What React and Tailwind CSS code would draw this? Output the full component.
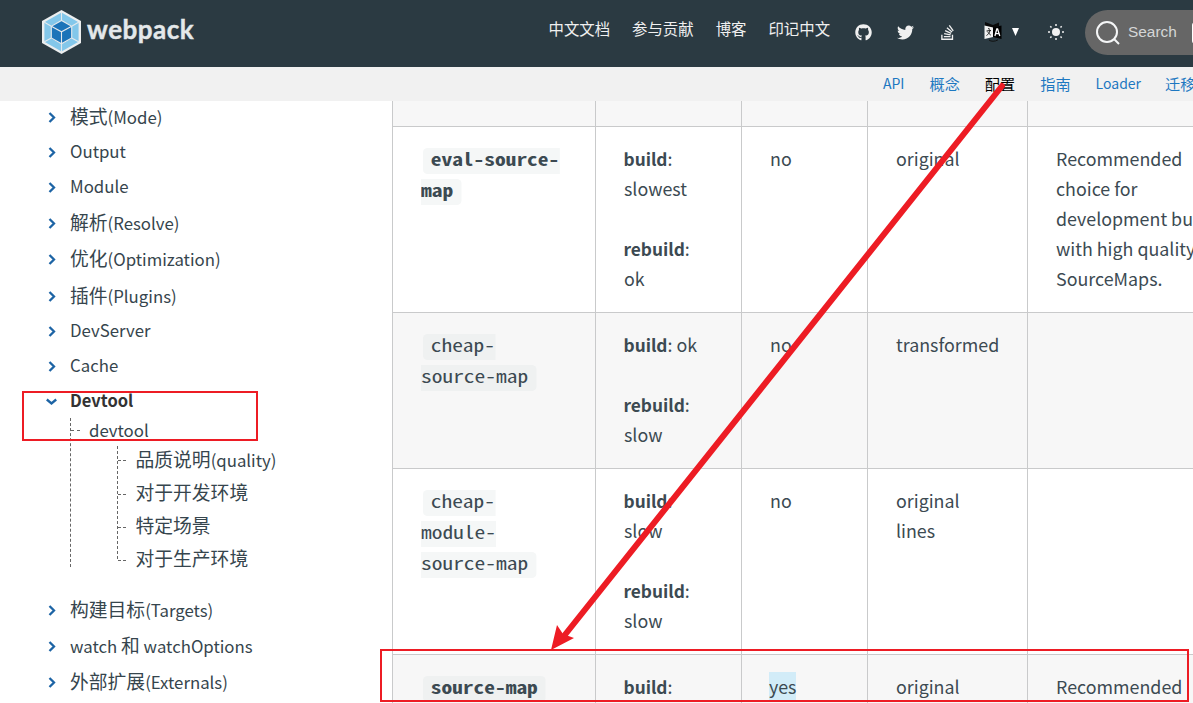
import React from "react";
import { FaGithub, FaTwitter, FaStackOverflow } from "react-icons/fa";

const CJK = /([\u3400-\u9fff]+)/;

function Mixed({ text, cjk, latin }) {
  return text.split(CJK).filter(Boolean).map((part, i) => (
    <span key={i} className={CJK.test(part) ? cjk : latin}>{part}</span>
  ));
}

function Logo() {
  return (
    <svg className="h-11 w-[39px]" viewBox="0 0 39 44">
      <path d="M19.5 0 39 11v22L19.5 44 0 33V11z" fill="#eceeef" />
      <path d="M19.5 2.6 36.6 12.200v19.600L19.5 41.4 2.400 31.800V12.200z" fill="#83c7ea" />
      <path d="M19.5 10.5 29.7 16v12.4L19.5 34 9.3 28.4V16z" fill="#1c74b9" />
      <path d="M19.5 2v9M19.5 34v8M2 12l7.3 4.2M37 12l-7.3 4.2M2 32l7.3-4M37 32l-7.3-4M9.3 16.2v11.8l10.2 5.8 10.2-5.8V16.2L19.5 10.5zM9.3 16.2l10.2 5.6 10.2-5.6M19.5 21.8v12" fill="none" stroke="#e4e9ec" strokeWidth="1.1" />
    </svg>
  );
}

function LanguageIcon() {
  return (
    <svg className="h-5 w-[18px]" viewBox="0 0 18 20">
      <path d="M1 0l4 1.500L9 3l6-2.500V4L9 6 1 4z" fill="#0a0a0a" />
      <path d="M.5 3.500 9 5.500V15L.5 17z" fill="#f2f2f2" />
      <path d="M9 5.500 17.5 3.500V17L9 15z" fill="#000" />
      <path d="M4 6.500l2 .8M2.500 9l4.500-.6M6 8.500c-.5 2.500-2 4-3.500 5M3.500 10l3.300 3.200" stroke="#222" fill="none" />
      <path d="m10.900 14 1.900-7h.8l2.200 7M11.700 11.700h3.500" stroke="#fff" strokeWidth="1.300" fill="none" />
      <path d="M5 18c2 1.700 6 1.700 9-.2" stroke="#111" fill="none" />
    </svg>
  );
}

function SunIcon() {
  return (
    <svg className="size-4" viewBox="0 0 16 16">
      <circle cx="8" cy="8" r="4" fill="#f2f2f2" />
      <path d="M8 0v2M8 14v2M0 8h2M14 8h2M2.300 2.300l1.200 1.200M12.500 12.500l1.200 1.200M2.300 13.700l1.200-1.200M12.500 3.500l1.200-1.200" stroke="#f2f2f2" strokeWidth="1.500" />
    </svg>
  );
}

function Header() {
  return (
    <header className="flex h-[67px] w-full bg-[#2b3a42] text-[#f0f0f0]">
      <div className="flex w-[548.5px] shrink-0 pt-2.5 pl-[42px]">
        <Logo />
        <span className="ml-1.5 h-9 font-[Lato] text-[26px] leading-[38px] font-bold tracking-[0.5px] text-[#e4e8ea] [-webkit-text-stroke:0.4px_#e4e8ea]">webpack</span>
      </div>
      <nav className="flex shrink-0 gap-[22px] pt-3.5 text-[15.4px] leading-7">
        <a>中文文档</a><a>参与贡献</a><a>博客</a><a>印记中文</a>
      </nav>
      <div className="flex h-16 shrink-0 items-center pl-[24.500px]">
        <FaGithub className="size-[17px]" />
        <FaTwitter className="ml-[25px] size-[17px]" />
        <FaStackOverflow className="ml-[25px] size-[17px]" />
        <div className="ml-7 flex items-center"><LanguageIcon /><svg className="mb-px ml-2.5 h-2 w-[7px]" viewBox="0 0 7 8"><path d="M0 0h7L3.500 8z" fill="#fff" /></svg></div>
        <div className="ml-[29px]"><SunIcon /></div>
      </div>
      <div className="mt-2.5 ml-[21.500px] flex h-[45px] w-[150px] shrink-0 items-center rounded-l-full bg-[#666] pl-[11px]">
        <svg className="size-6" viewBox="0 0 24 24" fill="none" stroke="#f5f6f7" strokeWidth="2"><circle cx="11" cy="11" r="10" /><path d="m18 18 5 5" /></svg>
        <span className="-mt-[2px] ml-2 font-['Liberation_Sans'] text-[15.400px] text-[#d5d6d7]">Search</span>
        <span className="ml-[15px] h-[22px] w-6 rounded-[3px] border border-white bg-[#d5dbe4]" />
      </div>
    </header>
  );
}

function SubNav() {
  return (
    <nav className="flex h-[34px] w-full gap-[25px] bg-[#f1f1f1] pl-[883px] text-[14px] leading-[32px] whitespace-nowrap text-[#1d78c1]">
      <a>API</a><a className="text-[15.200px]">概念</a><a className="text-[15.200px] text-black">配置</a><a className="text-[15.200px]">指南</a><a>Loader</a><a className="-ml-px text-[15.200px]">迁移</a>
    </nav>
  );
}

function Chevron({ open }) {
  return (
    <svg className="mt-[3px] w-[11px] shrink-0" height="12" viewBox="0 0 11 12" fill="none" stroke="#1d64a5" strokeWidth="2.300">
      {open ? <path d="m.8 3.500 4.700 4L10.200 3.500" /> : <path d="m3.500 1 4.500 4.500L3.500 10" />}
    </svg>
  );
}

function Item({ text, gap, open }) {
  const plain = CJK.test(text) ? "ml-[13px]" : "ml-[13px] pt-[2px]";
  return (
    <div className={`flex h-6 items-center pl-[46px] ${gap}`}>
      <Chevron open={open} />
      <span className={open ? "ml-[13px] text-[16.500px] font-bold text-[#333]" : plain}>
        {open ? text : <Mixed text={text} cjk="text-[18.800px]" latin="text-[16.800px]" />}
      </span>
    </div>
  );
}

const sections = [
  ["模式(Mode)", "mt-[3px]"], ["Output", "mt-[11px]"], ["Module", "mt-[11px]"],
  ["解析(Resolve)", "mt-3"], ["优化(Optimization)", "mt-3"], ["插件(Plugins)", "mt-[13px]"],
  ["DevServer", "mt-[11px]"], ["Cache", "mt-[11px]"],
];
const topics = [
  ["品质说明(quality)", "-mt-[3px] h-[27px] pb-px"], ["对于开发环境", "mt-[3px] h-[33px]"], ["特定场景", "h-[33px]"], ["对于生产环境", "h-[33px]"],
];
const more = [["构建目标(Targets)", "mt-[30px]"], ["watch 和 watchOptions", "mt-3"], ["外部扩展(Externals)", "mt-3"]];

function Sidebar() {
  return (
    <aside className="w-[392px] shrink-0 whitespace-nowrap text-[#36454d]">
      {sections.map(([t, g]) => <Item key={t} text={t} gap={g} />)}
      <Item text="Devtool" gap="mt-[11px]" open />
      <div className="mt-[6px] ml-[70px] h-[149px] border-l border-dashed border-[#666]">
        <div className="flex h-6 items-center"><i className="w-[9px] border-t border-dashed border-[#666]" /><span className="ml-[9px] pt-[2px] text-[16.800px]">devtool</span></div>
        <div className="mt-[7px] ml-[46px] h-[113px] border-l border-dashed border-[#666]">
          {topics.map(([t, h]) => (
            <div key={t} className={`flex items-center ${h}`}>
              <i className="mt-[3px] w-2 border-t border-dashed border-[#666]" />
              <span className="ml-[9.500px]"><Mixed text={t} cjk="text-[18.800px]" latin="text-[16.800px]" /></span>
            </div>
          ))}
        </div>
      </div>
      {more.map(([t, g]) => <Item key={t} text={t} gap={g} />)}
    </aside>
  );
}

function Code({ lines, bold, dark }) {
  const bg = dark ? "bg-[#eff1f1]" : "bg-[#f5f7f7]";
  return (
    <div className={`flex flex-col items-start gap-[5px] pt-[5px] font-['Noto_Sans_Mono_CJK_SC','Liberation_Mono',monospace] text-[18px] leading-[21px] ${bold ? "font-bold" : ""}`}>
      {lines.map((l, i) => (
        <code key={l} className={`h-[26px] origin-left scale-x-[1.19] font-[inherit] ${bg} ${i === 0 ? "ml-0.5 rounded-l pl-[6.500px]" : ""} ${i === lines.length - 1 ? "rounded-r pr-[6.500px]" : ""}`}>{l}</code>
      ))}
    </div>
  );
}

const rows = [
  { h: "h-[186px]", bg: "", code: ["eval-source-", "map"], bold: true, build: "slowest", rebuild: "ok", prod: "no", quality: ["original"], note: ["Recommended", "choice for", "development bu", "with high quality", "SourceMaps."] },
  { h: "h-[156px]", bg: "bg-[#f7f7f7]", code: ["cheap-", "source-map"], build: "ok", inline: true, rebuild: "slow", prod: "no", quality: ["transformed"], note: [] },
  { h: "h-[186px]", bg: "", code: ["cheap-", "module-", "source-map"], build: "slow", rebuild: "slow", prod: "no", quality: ["original", "lines"], note: [] },
  { h: "h-[186px]", bg: "bg-[#f7f7f7]", code: ["source-map"], bold: true, prod: "yes", quality: ["original"], note: ["Recommended"] },
];

const COLS = "grid grid-cols-[203px_146px_126px_160px_300px] border-b border-[#c9cacb] *:border-l *:border-[#c9cacb]";

function Label({ children }) {
  return <><b className="text-[17.300px] leading-none">{children}</b>:</>;
}

function Table() {
  return (
    <main className="w-[801px] shrink-0 overflow-hidden text-[17.850px] leading-[30px] whitespace-nowrap text-[#3c4a52]">
      <div className={`h-[26px] bg-[#f7f7f7] ${COLS}`}><i /><i /><i /><i /><i /></div>
      {rows.map((r, i) => (
        <div key={i} className={`${r.h} ${r.bg} ${COLS} *:pt-4 *:pl-7`}>
          <div><Code lines={r.code} bold={r.bold} dark={!!r.bg} /></div>
          <div className="-indent-[0.5px]">
            <div><Label>build</Label>{r.inline ? " " : <br />}{r.build}</div>
            {r.rebuild && <div className="pt-[30px]"><Label>rebuild</Label><br />{r.rebuild}</div>}
          </div>
          <div>{r.prod === "yes" ? <span className="-ml-px mt-px inline-block h-7 bg-[#d2ecf8] leading-7">yes</span> : r.prod}</div>
          <div>{r.quality.map((q) => <div key={q}>{q}</div>)}</div>
          <div>{r.note.map((q) => <div key={q}>{q}</div>)}</div>
        </div>
      ))}
    </main>
  );
}

export default function App() {
  return (
    <div className="relative flex h-[703px] w-[1193px] flex-col overflow-hidden bg-white font-['Noto_Sans_CJK_SC',sans-serif] text-[#2b3a42]">
      <Header />
      <SubNav />
      <div className="flex h-[602px] overflow-hidden"><Sidebar /><Table /></div>
      <div className="absolute top-[391px] left-[22px] h-[50px] w-[236px] border-2 border-[#ed1c24]" />
      <div className="absolute top-[649px] left-[380px] h-[53px] w-[809px] border-2 border-[#ed1c24]" />
      <svg className="absolute inset-0" width="1193" height="703" viewBox="0 0 1193 703">
        <path d="M1002 86 564 636" stroke="#ed1c24" strokeWidth="6" strokeLinecap="round" />
        <path d="m551 650 6-25 6 9 11 4z" fill="#ed1c24" />
      </svg>
    </div>
  );
}
